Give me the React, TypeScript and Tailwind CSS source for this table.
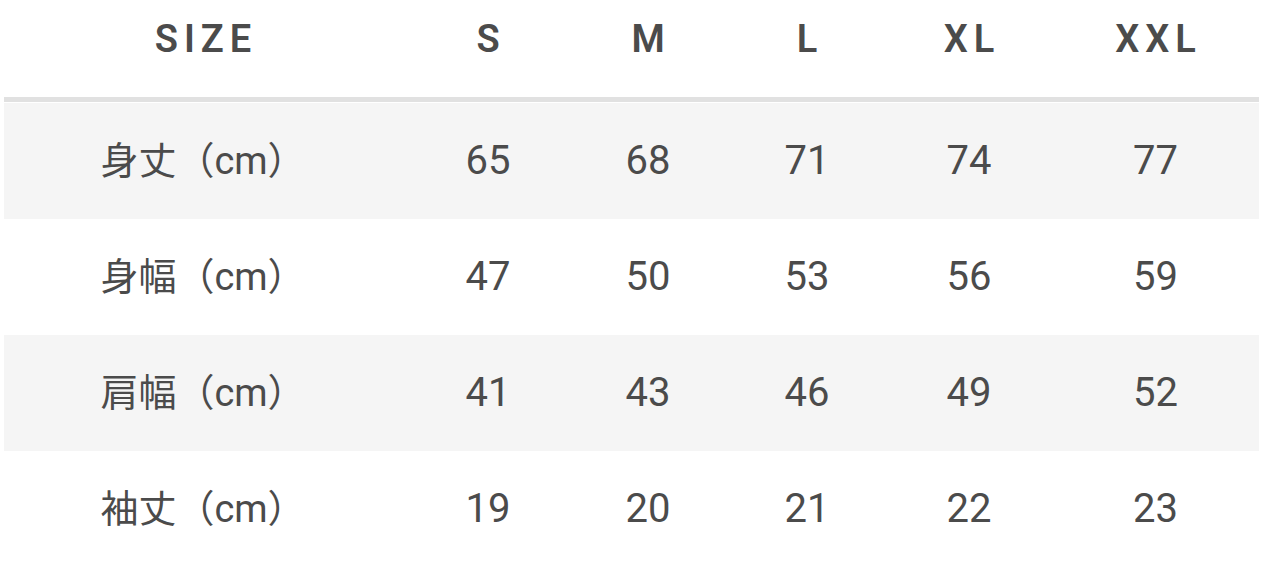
const sizes = ["S", "M", "L", "XL", "XXL"];

const rows = [
  { label: "身丈（cm）", values: [65, 68, 71, 74, 77] },
  { label: "身幅（cm）", values: [47, 50, 53, 56, 59] },
  { label: "肩幅（cm）", values: [41, 43, 46, 49, 52] },
  { label: "袖丈（cm）", values: [19, 20, 21, 22, 23] },
];

const cols = "grid grid-cols-[404px_160px_160px_158px_166px_207px]";

export default function App() {
  return (
    <div className="w-[1280px] h-[569px] bg-white font-['Roboto','Noto_Sans_CJK_JP',sans-serif] text-[#4b4b4b] overflow-hidden">
      <div className="ml-[4px] w-[1255px]">
        <div className={`${cols} h-[102px] pb-[19px] items-center border-b-[5px] border-[#e1e1e1]`}>
          <div className="text-center text-[38px] font-semibold tracking-[6px]">SIZE</div>
          {sizes.map((s) => (
            <div key={s} className="text-center text-[38px] font-semibold tracking-[6px] pl-[6px]">
              {s}
            </div>
          ))}
        </div>
        <div className="h-[1px]" />
        {rows.map((row, i) => (
          <div
            key={row.label}
            className={`${cols} h-[116px] items-center ${i % 2 === 0 ? "bg-[#f5f5f5]" : "bg-white"}`}
          >
            <div className="text-center text-[38px] pr-[6px]">{row.label}</div>
            {row.values.map((v) => (
              <div key={v} className="text-center text-[40px]">
                {v}
              </div>
            ))}
          </div>
        ))}
      </div>
    </div>
  );
}
